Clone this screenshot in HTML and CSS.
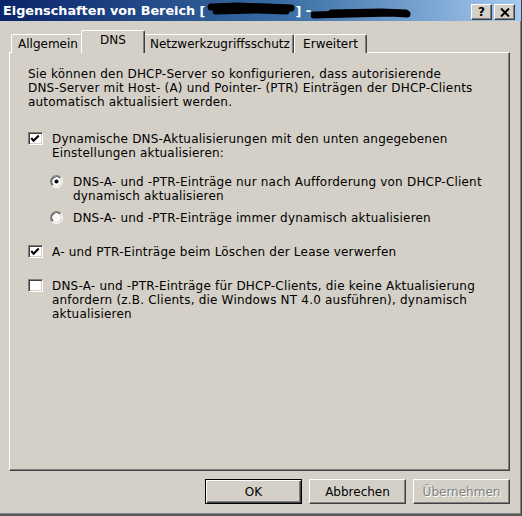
FILE: index.html
```html
<!DOCTYPE html>
<html lang="de">
<head>
<meta charset="utf-8">
<title>Eigenschaften von Bereich</title>
<link rel="stylesheet" href="styles.css">
</head>
<body>
<div class="window">
  <div class="titlebar">
    <div class="title">
      <span>Eigenschaften von Bereich [</span><svg class="redact r1" width="88" height="16" viewBox="0 0 88 16"><path d="M4 6 L30 5 L60 6 L84 7" stroke="#000" stroke-width="7" stroke-linecap="round" fill="none"/><path d="M8 11 L50 10 L80 11" stroke="#000" stroke-width="5" stroke-linecap="round" fill="none"/></svg><span>] -</span><svg class="redact r2" width="102" height="16" viewBox="0 0 102 16"><path d="M3 11 L40 10 L80 9 L96 10" stroke="#000" stroke-width="7" stroke-linecap="round" fill="none"/><path d="M20 8 L70 7 L95 8" stroke="#000" stroke-width="5" stroke-linecap="round" fill="none"/></svg>
    </div>
    <div class="caption-buttons">
      <span class="cbtn help">?</span>
      <span class="cbtn close"><svg width="10" height="9" viewBox="0 0 10 9"><path d="M1 0.5 L9 8.5 M9 0.5 L1 8.5" stroke="#000" stroke-width="2" fill="none"/></svg></span>
    </div>
  </div>
  <div class="content">
    <div class="tabs">
      <div class="tab t-general">Allgemein</div>
      <div class="tab t-dns active">DNS</div>
      <div class="tab t-nap">Netzwerkzugriffsschutz</div>
      <div class="tab t-adv">Erweitert</div>
    </div>
    <div class="panel">
      <p class="intro">Sie können den DHCP-Server so konfigurieren, dass autorisierende<br>DNS-Server mit Host- (A) und Pointer- (PTR) Einträgen der DHCP-Clients<br>automatisch aktualisiert werden.</p>

      <div class="option opt-dyn">
        <span class="checkbox"><svg width="15" height="13" viewBox="0 0 15 13"><path d="M3.5 6 L6 8.8 L11.5 3.2" stroke="#000" stroke-width="2.2" fill="none"/></svg></span>
        <span class="label">Dynamische DNS-Aktualisierungen mit den unten angegebenen<br>Einstellungen aktualisieren:</span>
      </div>

      <div class="suboptions">
        <div class="option radio-opt">
          <span class="radio"><svg width="13" height="13" viewBox="0 0 12 12"><circle cx="6" cy="6" r="5" fill="#fff"/><path d="M9.89 2.11 A5.5 5.5 0 0 0 2.11 9.89" stroke="#808080" stroke-width="1" fill="none"/><path d="M2.11 9.89 A5.5 5.5 0 0 0 9.89 2.11" stroke="#fff" stroke-width="1" fill="none"/><path d="M9.18 2.82 A4.5 4.5 0 0 0 2.82 9.18" stroke="#404040" stroke-width="1" fill="none"/><path d="M2.82 9.18 A4.5 4.5 0 0 0 9.18 2.82" stroke="#d4d0c8" stroke-width="1" fill="none"/><circle cx="6" cy="6" r="1.9" fill="#000"/></svg></span>
          <span class="label">DNS-A- und -PTR-Einträge nur nach Aufforderung von DHCP-Client<br>dynamisch aktualisieren</span>
        </div>
        <div class="option radio-opt">
          <span class="radio"><svg width="13" height="13" viewBox="0 0 12 12"><circle cx="6" cy="6" r="5" fill="#fff"/><path d="M9.89 2.11 A5.5 5.5 0 0 0 2.11 9.89" stroke="#808080" stroke-width="1" fill="none"/><path d="M2.11 9.89 A5.5 5.5 0 0 0 9.89 2.11" stroke="#fff" stroke-width="1" fill="none"/><path d="M9.18 2.82 A4.5 4.5 0 0 0 2.82 9.18" stroke="#404040" stroke-width="1" fill="none"/><path d="M2.82 9.18 A4.5 4.5 0 0 0 9.18 2.82" stroke="#d4d0c8" stroke-width="1" fill="none"/></svg></span>
          <span class="label">DNS-A- und -PTR-Einträge immer dynamisch aktualisieren</span>
        </div>
      </div>

      <div class="option opt-lease">
        <span class="checkbox"><svg width="15" height="13" viewBox="0 0 15 13"><path d="M3.5 6 L6 8.8 L11.5 3.2" stroke="#000" stroke-width="2.2" fill="none"/></svg></span>
        <span class="label">A- und PTR-Einträge beim Löschen der Lease verwerfen</span>
      </div>

      <div class="option opt-legacy">
        <span class="checkbox"></span>
        <span class="label">DNS-A- und -PTR-Einträge für DHCP-Clients, die keine Aktualisierung<br>anfordern (z.B. Clients, die Windows NT 4.0 ausführen), dynamisch<br>aktualisieren</span>
      </div>
    </div>
    <div class="buttons">
      <button class="btn default">OK</button>
      <button class="btn">Abbrechen</button>
      <button class="btn disabled">Übernehmen</button>
    </div>
  </div>
</div>
</body>
</html>
```

FILE: styles.css
```css
* { box-sizing: border-box; }
html, body { margin: 0; padding: 0; }
body {
  width: 522px;
  height: 516px;
  overflow: hidden;
  background: #d4d0c8;
  font-family: "DejaVu Sans", Verdana, sans-serif;
  font-size: 12px;
  color: #000;
}
.window {
  width: 522px;
  height: 516px;
  display: flex;
  flex-direction: column;
  background: #d4d0c8;
  border-right: 1px solid #404040;
  border-bottom: 2px solid #5a5a5a;
  box-shadow: inset -1px -1px 0 #808080;
}
.titlebar {
  height: 21px;
  flex: none;
  display: flex;
  align-items: center;
  justify-content: space-between;
  padding: 0 6px 0 3px;
  background: linear-gradient(to right, #0a246a 0%, #3a6ea5 55%, #a6caf0 100%);
}
.title {
  display: flex;
  align-items: center;
  color: #fff;
  font-weight: bold;
  font-size: 12.8px;
  white-space: pre;
}
.redact { display: block; }
.r1 { margin: -3px 0 0 2px; }
.r2 { margin: 2px 0 0 0; }
.caption-buttons {
  display: flex;
  gap: 2px;
  align-self: flex-start;
  margin-top: 4px;
}
.cbtn {
  width: 21px;
  height: 16px;
  display: flex;
  align-items: center;
  justify-content: center;
  background: #d4d0c8;
  border-top: 1px solid #fff;
  border-left: 1px solid #fff;
  border-right: 1px solid #404040;
  border-bottom: 1px solid #404040;
  box-shadow: inset -1px -1px 0 #808080;
  font-weight: bold;
  font-size: 12px;
  line-height: 1;
  color: #000;
}
.content {
  flex: 1;
  display: flex;
  flex-direction: column;
  padding: 10px 11px 0 9px;
}
.tabs {
  display: flex;
  align-items: flex-end;
  height: 22px;
  padding-left: 2px;
  position: relative;
  z-index: 2;
  margin-bottom: -1px;
}
.tab {
  height: 19px;
  padding: 2px 6px 0;
  text-align: center;
  line-height: 15px;
  border-top: 1px solid #fff;
  border-left: 1px solid #fff;
  border-right: 1px solid #404040;
  box-shadow: inset -1px 0 0 #808080;
  border-top-left-radius: 2px;
  border-top-right-radius: 2px;
  background: #d4d0c8;
  white-space: nowrap;
}
.t-general { width: 72px; }
.t-dns { width: 60px; }
.t-nap { width: 151px; }
.t-adv { width: 73px; }
.tab.active {
  height: 23px;
  margin: 0 -2px;
  width: 64px;
  padding-top: 1px;
  line-height: 17px;
  position: relative;
  z-index: 3;
}
.panel {
  height: 419px;
  flex: none;
  border-top: 1px solid #fff;
  border-left: 1px solid #fff;
  border-right: 1px solid #404040;
  border-bottom: 1px solid #404040;
  box-shadow: inset -1px -1px 0 #808080;
  padding: 14px 18px 0 18px;
  line-height: 14px;
  letter-spacing: 0.2px;
}
.intro { margin: 0 0 23px 0; }
.option {
  display: flex;
  align-items: flex-start;
}
.checkbox {
  flex: none;
  width: 15px;
  height: 13px;
  margin-top: 0px;
  margin-right: 9px;
  background: #fff;
  border-top: 1px solid #808080;
  border-left: 1px solid #808080;
  border-right: 1px solid #fff;
  border-bottom: 1px solid #fff;
  box-shadow: inset 1px 1px 0 #404040, inset -1px -1px 0 #d4d0c8;
  display: flex;
}
.checkbox svg { display: block; margin: -1px 0 0 -1px; }
.radio {
  flex: none;
  width: 13px;
  height: 13px;
  margin-right: 10px;
}
.radio svg { display: block; }
.suboptions {
  padding: 15px 0 0 22px;
  display: flex;
  flex-direction: column;
  gap: 8px;
}
.opt-lease { margin-top: 20px; }
.opt-legacy { margin-top: 20px; }
.buttons {
  display: flex;
  justify-content: flex-end;
  gap: 7px;
  padding-top: 8px;
  padding-right: 0;
}
.btn {
  width: 97px;
  height: 25px;
  padding: 0;
  font-family: "DejaVu Sans", Verdana, sans-serif;
  font-size: 12px;
  color: #000;
  background: #d4d0c8;
  border-top: 1px solid #fff;
  border-left: 1px solid #fff;
  border-right: 1px solid #404040;
  border-bottom: 1px solid #404040;
  box-shadow: inset -1px -1px 0 #808080;
  border-radius: 0;
}
.btn.default {
  border: 1px solid #000;
  box-shadow: inset 1px 1px 0 #fff, inset -1px -1px 0 #404040, inset -2px -2px 0 #808080;
}
.btn.disabled {
  color: #808080;
  text-shadow: 1px 1px 0 #fff;
}
```
